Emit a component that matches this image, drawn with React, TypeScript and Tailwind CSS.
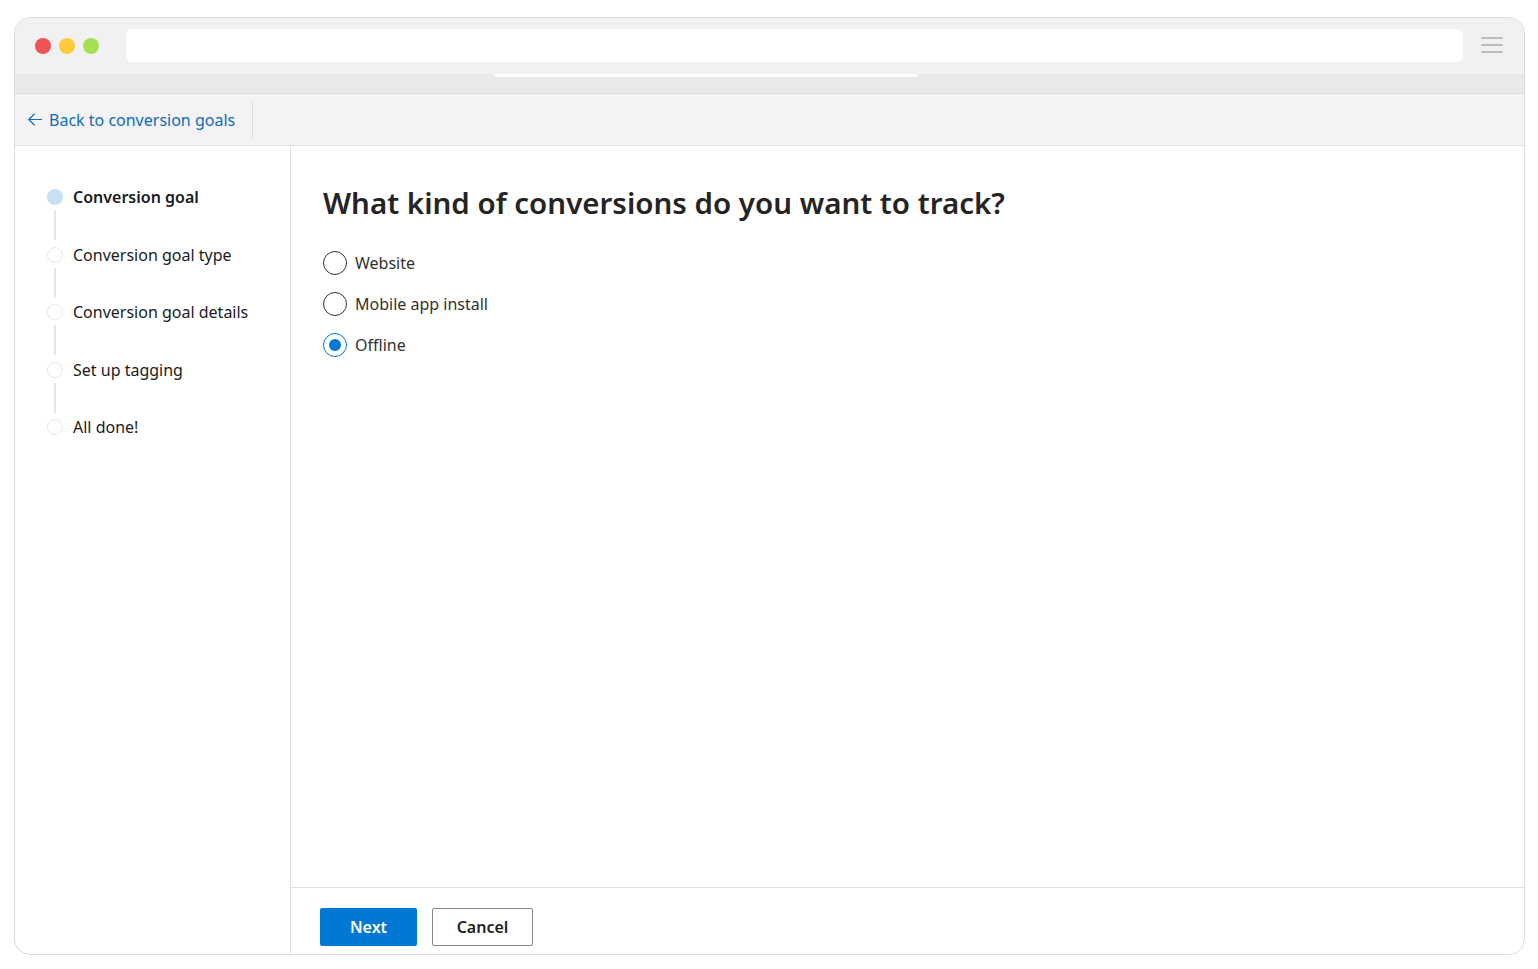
import { useState } from 'react';

const passos = [
  'Conversion goal',
  'Conversion goal type',
  'Conversion goal details',
  'Set up tagging',
  'All done!',
];

const opcoes = ['Website', 'Mobile app install', 'Offline'];

const App = () => {
  const [tipo, setTipo] = useState('Offline');

  return (
    <div
      className="w-full h-[969px] bg-white pt-[17px] pl-[14px]"
      style={{ fontFamily: '"Noto Sans", "Open Sans", Arial, sans-serif' }}
    >
      <div className="w-[1511px] h-[938px] border border-[#dcdcdc] rounded-[16px] overflow-hidden flex flex-col bg-white">
        {/* barra do navegador */}
        <div className="h-[56px] bg-[#f1f1f1] flex items-center pl-[20px] pr-[21px] shrink-0">
          <div className="flex gap-[8px]">
            <span className="w-[16px] h-[16px] rounded-full bg-[#ee5453]" />
            <span className="w-[16px] h-[16px] rounded-full bg-[#fcca3b]" />
            <span className="w-[16px] h-[16px] rounded-full bg-[#a6e050]" />
          </div>
          <div className="ml-[27px] flex-1 h-[33px] bg-white rounded-[6px] mt-[-2px]" />
          <div className="ml-[18px] w-[22px] flex flex-col gap-[5px] mt-[-2px]">
            <span className="h-[2px] bg-[#bdbdbd] rounded" />
            <span className="h-[2px] bg-[#bdbdbd] rounded" />
            <span className="h-[2px] bg-[#bdbdbd] rounded" />
          </div>
        </div>
        <div className="h-[20px] bg-[#e9e9e9] shrink-0 border-b border-[#e0e0e0]">
          <div className="ml-[479px] w-[424px] h-[3px] bg-white rounded-b-[4px]" />
        </div>

        {/* cabeçalho */}
        <div className="h-[52px] bg-[#f3f3f3] border-b border-[#e1e1e1] flex items-center shrink-0">
          <a className="flex items-center gap-[4px] pl-[11px] pr-[17px] text-[#0f6cbd] text-[16px] cursor-pointer">
            <svg width="19" height="19" viewBox="0 0 20 20" fill="none" stroke="#0f6cbd" strokeWidth="1.3">
              <path d="M17 10H3M9 4l-6 6 6 6" />
            </svg>
            Back to conversion goals
          </a>
          <div className="w-px h-[38px] bg-[#dcdcdc]" />
        </div>

        <div className="flex-1 flex min-h-0">
          {/* passos */}
          <div className="w-[276px] border-r border-[#e1e1e1] pt-[43px] pl-[32px] shrink-0">
            {passos.map((p, i) => (
              <div key={p}>
                <div className="flex items-center h-[16px]">
                  <span
                    className={`w-[16px] h-[16px] rounded-full shrink-0 ${i === 0 ? 'bg-[#c7e0f4]' : 'border border-[#e6e6e6] bg-white'}`}
                  />
                  <span
                    className={`ml-[10px] text-[16px] text-[#1b1b1b] whitespace-nowrap ${i === 0 ? 'font-semibold' : ''}`}
                  >
                    {p}
                  </span>
                </div>
                {i < passos.length - 1 && (
                  <div className="w-[16px] h-[41.5px] flex justify-center">
                    <div className="mt-[5px] w-[2px] h-[30px] bg-[#e6e6e6]" />
                  </div>
                )}
              </div>
            ))}
          </div>

          {/* conteúdo */}
          <div className="flex-1 flex flex-col">
            <div className="flex-1 pl-[32px] pt-[37px]">
              <h1 className="text-[29.5px] leading-[40px] font-semibold text-[#252423]">
                What kind of conversions do you want to track?
              </h1>
              <div className="mt-[28px] flex flex-col gap-[17px]">
                {opcoes.map((o) => (
                  <label key={o} className="flex items-center h-[24px] cursor-pointer" onClick={() => setTipo(o)}>
                    <span
                      className={`w-[24px] h-[24px] rounded-full border-[1.5px] flex items-center justify-center ${tipo === o ? 'border-[#0078d4]' : 'border-[#323130]'}`}
                    >
                      {tipo === o && <span className="w-[12px] h-[12px] rounded-full bg-[#0078d4]" />}
                    </span>
                    <span className="ml-[8px] text-[16px] text-[#323130]">{o}</span>
                  </label>
                ))}
              </div>
            </div>
            <div className="h-[67px] border-t border-[#e1e1e1] pl-[29px] pt-[20px] flex gap-[15px] shrink-0">
              <button className="w-[97px] h-[38px] bg-[#0078d4] text-white text-[16px] font-semibold rounded-[2px]">
                Next
              </button>
              <button className="w-[101px] h-[38px] bg-white border border-[#8a8886] text-[#201f1e] text-[16px] font-semibold rounded-[2px]">
                Cancel
              </button>
            </div>
          </div>
        </div>
      </div>
    </div>
  );
};

export default App;
